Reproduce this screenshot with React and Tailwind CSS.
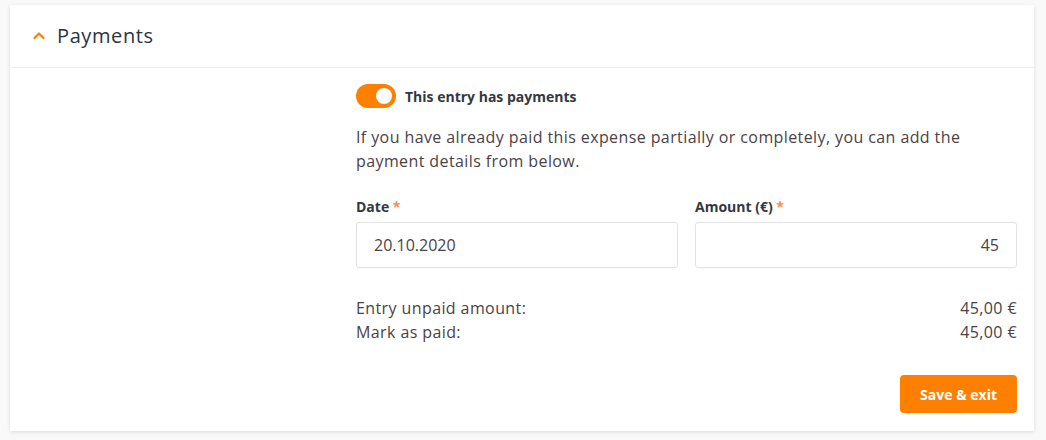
import React, { useState } from 'react';

const App = () => {
  const [hasPayments, setHasPayments] = useState(true);

  return (
    <div className="min-h-[440px] bg-[#f9f9f9] pl-[10px] pr-[12px] pt-[5px] pb-2" style={{ fontFamily: '"Open Sans", Lato, sans-serif' }}>
      <div className="bg-white shadow-[0_1px_4px_rgba(0,0,0,0.12)]">
        {/* Header */}
        <div className="h-[63px] flex items-center pl-[22px] border-b border-[#f0f0f0]">
          <svg width="14" height="14" viewBox="0 0 14 14" className="mr-[11px]">
            <path d="M2.5 9 L7 4.5 L11.5 9" fill="none" stroke="#ff8000" strokeWidth="2.2" strokeLinecap="round" strokeLinejoin="round" />
          </svg>
          <h2 className="text-[20px] text-[#2b3445] font-medium tracking-[0.6px]">Payments</h2>
        </div>

        {/* Body */}
        <div className="pl-[346px] pr-[17px] pt-[16px] pb-[18px]">
          <div className="flex items-center gap-[9px]">
            <button
              onClick={() => setHasPayments(!hasPayments)}
              className={`relative w-[40px] h-[24px] rounded-full ${hasPayments ? 'bg-[#ff8000]' : 'bg-gray-300'}`}
            >
              <span className={`absolute top-[4px] w-[16px] h-[16px] rounded-full bg-white ${hasPayments ? 'left-[20px]' : 'left-[4px]'}`} />
            </button>
            <span className="text-[14px] font-bold text-[#333842]">This entry has payments</span>
          </div>

          <p className="mt-[17px] text-[16px] leading-[24px] text-[#4b4246] tracking-[0.4px]">
            If you have already paid this expense partially or completely, you can add the<br />
            payment details from below.
          </p>

          <div className="mt-[24px] grid grid-cols-2 gap-[17px]">
            <div>
              <label className="block text-[14px] font-bold text-[#333842] leading-[20px]">
                Date <span className="text-[#ff8a4c]">*</span>
              </label>
              <div className="mt-[5px] h-[46px] border border-[#e3e3e3] rounded-[3px] flex items-center px-[17px] text-[16px] text-[#4b4246]">
                20.10.2020
              </div>
            </div>
            <div>
              <label className="block text-[14px] font-bold text-[#333842] leading-[20px]">
                Amount (€) <span className="text-[#ff8a4c]">*</span>
              </label>
              <div className="mt-[5px] h-[46px] border border-[#e3e3e3] rounded-[3px] flex items-center justify-end px-[17px] text-[16px] text-[#4b4246]">
                45
              </div>
            </div>
          </div>

          <div className="mt-[28px] text-[16px] leading-[24px] text-[#4b4246] tracking-[0.4px]">
            <div className="flex justify-between">
              <span>Entry unpaid amount:</span>
              <span>45,00 €</span>
            </div>
            <div className="flex justify-between">
              <span>Mark as paid:</span>
              <span>45,00 €</span>
            </div>
          </div>

          <div className="mt-[31px] flex justify-end">
            <button className="h-[38px] px-[20px] bg-[#ff8000] rounded-[4px] text-white text-[14px] font-bold">
              Save &amp; exit
            </button>
          </div>
        </div>
      </div>
    </div>
  );
};

export default App;
